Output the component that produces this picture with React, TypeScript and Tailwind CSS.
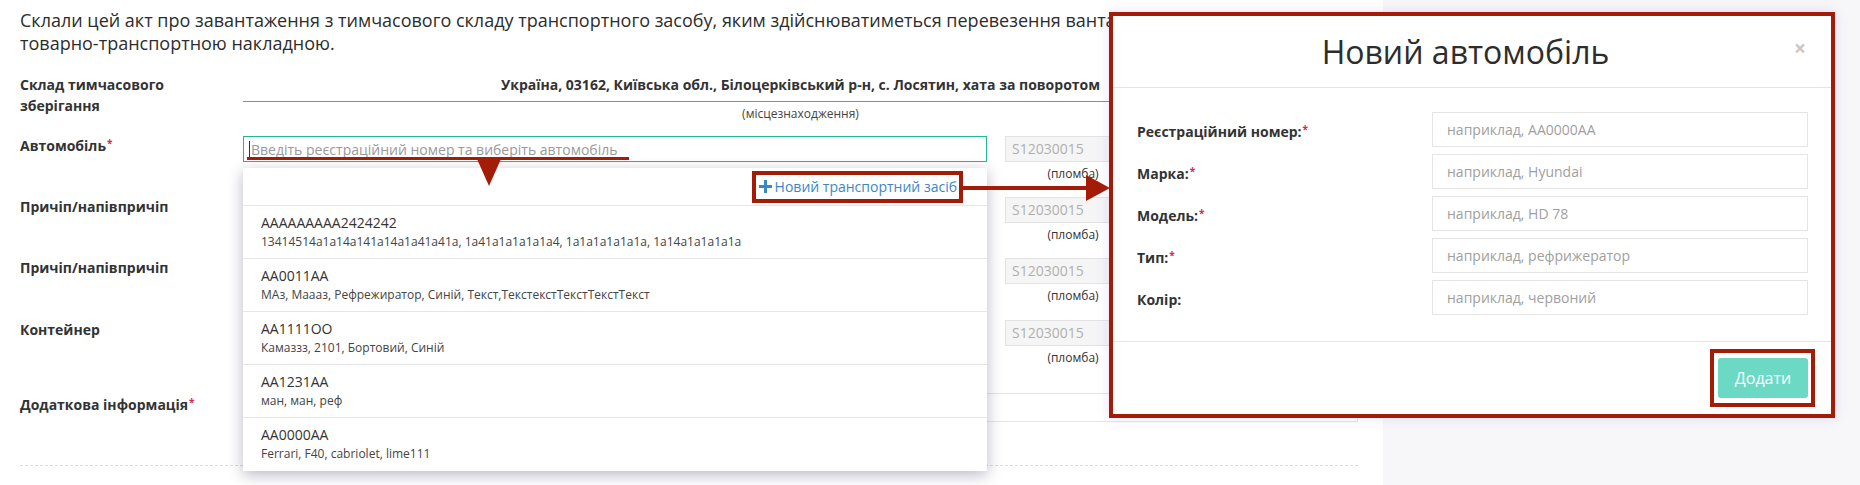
import React from "react";

const vehicles = [
  {
    plate: "AAAAAAAAA2424242",
    info: "13414514a1a14a141a14a1a41a41a, 1a41a1a1a1a1a4, 1a1a1a1a1a1a, 1a14a1a1a1a1a",
  },
  {
    plate: "AA0011AA",
    info: "МАз, Маааз, Рефрежиратор, Синій, Текст,ТекстекстТекстТекстТекст",
  },
  { plate: "AA1111OO", info: "Камаззз, 2101, Бортовий, Синій" },
  { plate: "AA1231AA", info: "ман, ман, реф" },
  { plate: "AA0000AA", info: "Ferrari, F40, cabriolet, lime111" },
];

const modalFields = [
  { label: "Реєстраційний номер:", required: true, placeholder: "наприклад, AA0000AA" },
  { label: "Марка:", required: true, placeholder: "наприклад, Hyundai" },
  { label: "Модель:", required: true, placeholder: "наприклад, HD 78" },
  { label: "Тип:", required: true, placeholder: "наприклад, рефрижератор" },
  { label: "Колір:", required: false, placeholder: "наприклад, червоний" },
];

function Req() {
  return <sup className="relative -top-[4px] ml-px text-[10px] font-bold text-[#e0264f]">*</sup>;
}

function Seal() {
  return (
    <div className="ml-[18px] w-[136px] shrink-0">
      <div className="h-[26px] border border-[#e3e3e3] bg-[#f5f5f5] px-[6px] text-[14px] leading-[24px] text-[#b0b0b0]">
        S12030015
      </div>
      <div className="mt-[4px] text-center text-[12px] leading-[16px] text-[#333]">(пломба)</div>
    </div>
  );
}

function Row({ label, required, children, className = "" }: { label: string; required?: boolean; children?: React.ReactNode; className?: string }) {
  return (
    <div className={`flex ${className}`}>
      <div className="w-[223px] shrink-0 text-[14px] font-bold leading-[20px]">
        {label}
        {required && <Req />}
      </div>
      <div className="relative h-[26px] w-[744px] shrink-0">{children}</div>
      <Seal />
    </div>
  );
}

function Dropdown() {
  return (
    <div className="absolute left-0 top-[32px] z-10 w-[744px] bg-white shadow-[0_4px_14px_rgba(40,40,80,0.32)]">
      <div className="flex h-[38px] items-center justify-end border-b border-[#e6e6e6] pr-[24px]">
        <span className="inline-flex h-[32px] items-center border-4 border-[#a21c07] pl-[3px] pr-[2px] text-[14px] text-[#3a87c8]">
          <svg width="13" height="13" viewBox="0 0 13 13" className="mr-[3px]">
            <path d="M5 0h3v5h5v3H8v5H5V8H0V5h5z" fill="#3a87c8" />
          </svg>
          Новий транспортний засіб
        </span>
      </div>
      {vehicles.map((v, i) => (
        <div key={v.plate} className={`h-[53px] pl-[18px] pt-[7px] ${i < vehicles.length - 1 ? "border-b border-[#e6e6e6]" : ""}`}>
          <div className="text-[14px] leading-[20px] text-[#333]">{v.plate}</div>
          <div className="text-[12px] leading-[18px] text-[#444]">{v.info}</div>
        </div>
      ))}
    </div>
  );
}

function Modal() {
  return (
    <div className="absolute left-[1109px] top-[12px] z-20 w-[726px] border-4 border-[#a21c07] bg-white shadow-[0_0_12px_rgba(140,100,220,0.2)]">
      <div className="relative flex h-[72px] items-center justify-center border-b border-[#e5e5e5] pr-[13px]">
        <h2 className="text-[32px] font-medium leading-[40px] text-[#2d2d2d]">Новий автомобіль</h2>
        <span className="absolute right-[25px] top-[18px] text-[21px] font-bold leading-[28px] text-[#c8c8c8]">×</span>
      </div>
      <div className="flex flex-col gap-[7px] pb-[26px] pl-[24px] pr-[23px] pt-[24px]">
        {modalFields.map((f) => (
          <div key={f.label} className="flex items-center">
            <div className="w-[295px] shrink-0 pt-[5px] text-[14px] font-bold leading-[20px] text-[#333]">
              {f.label}
              {f.required && <Req />}
            </div>
            <div className="h-[35px] flex-1 border border-[#e5e5e5] pl-[14px] text-[14px] leading-[33px] text-[#a0a0a0]">
              {f.placeholder}
            </div>
          </div>
        ))}
      </div>
      <div className="flex h-[73px] items-center justify-end border-t border-[#e5e5e5] pr-[16px]">
        <span className="border-4 border-[#a21c07] pb-[5px] pl-[4px] pr-[3px] pt-[5px]">
          <button className="h-[40px] w-[90px] rounded-[3px] bg-[#6cd9c4] text-[16px] text-white">Додати</button>
        </span>
      </div>
    </div>
  );
}

export default function App() {
  return (
    <div className="relative flex h-[485px] w-[1860px] overflow-hidden font-['Open_Sans',sans-serif] text-[#333]">
      <main className="w-[1383px] shrink-0 bg-white pl-5 pr-[25px]">
        <p className="whitespace-nowrap pt-[9px] text-[18px] font-medium leading-[23px] text-[#2d2d2d]">
          Склали цей акт про завантаження з тимчасового складу транспортного засобу, яким здійснюватиметься перевезення вантажу, зазначеного в
          <br />
          товарно-транспортною накладною.
        </p>

        <div className="mt-[19px] flex">
          <div className="w-[223px] shrink-0 text-[14px] font-bold leading-[21px]">
            Склад тимчасового
            <br />
            зберігання
          </div>
          <div className="flex-1">
            <div className="border-b border-[#8c8c8c] pb-[6px] text-center text-[14px] font-bold leading-[21px]">
              Україна, 03162, Київська обл., Білоцерківський р-н, с. Лосятин, хата за поворотом
            </div>
            <div className="mt-[4px] text-center text-[12px] leading-[16px] text-[#444]">(місцезнаходження)</div>
          </div>
        </div>

        <Row label="Автомобіль" required className="mt-[14px]">
          <div className="flex h-[26px] items-center border border-[#1fb899] pl-[5px] text-[14px] text-[#9a9a9a]">
            <span className="mr-px h-[17px] w-px bg-[#333]" />
            Введіть реєстраційний номер та виберіть автомобіль
          </div>
          <Dropdown />
        </Row>
        <Row label="Причіп/напівпричіп" className="mt-[15px]">
          <div className="h-[26px] border border-[#e5e5e5]" />
        </Row>
        <Row label="Причіп/напівпричіп" className="mt-[15px]">
          <div className="h-[26px] border border-[#e5e5e5]" />
        </Row>
        <Row label="Контейнер" className="mt-[16px]">
          <div className="h-[26px] border border-[#e5e5e5]" />
        </Row>

        <div className="mt-[27px] flex">
          <div className="w-[223px] shrink-0 pt-[2px] text-[14px] font-bold leading-[20px]">
            Додаткова інформація
            <Req />
          </div>
          <div className="h-[29px] flex-1 border border-[#e5e5e5]" />
        </div>

        <div className="mt-[43px] border-t border-dashed border-[#dcdcdc]" />
      </main>
      <aside className="flex-1 bg-[#f7f7f9]" />

      {/* annotations */}
      <div className="absolute left-[247px] top-[157px] z-20 h-[3px] w-[382px] bg-[#a21c07]" />
      <svg className="absolute left-[477px] top-[159px] z-20" width="24" height="27" viewBox="0 0 24 27">
        <polygon points="0,0 24,0 12,27" fill="#a21c07" />
      </svg>
      <svg className="absolute left-[963px] top-[172px] z-20" width="147" height="32" viewBox="0 0 147 32">
        <rect x="0" y="14" width="126" height="4" fill="#a21c07" />
        <polygon points="123,3 147,16 123,29" fill="#a21c07" />
      </svg>

      <Modal />
    </div>
  );
}
